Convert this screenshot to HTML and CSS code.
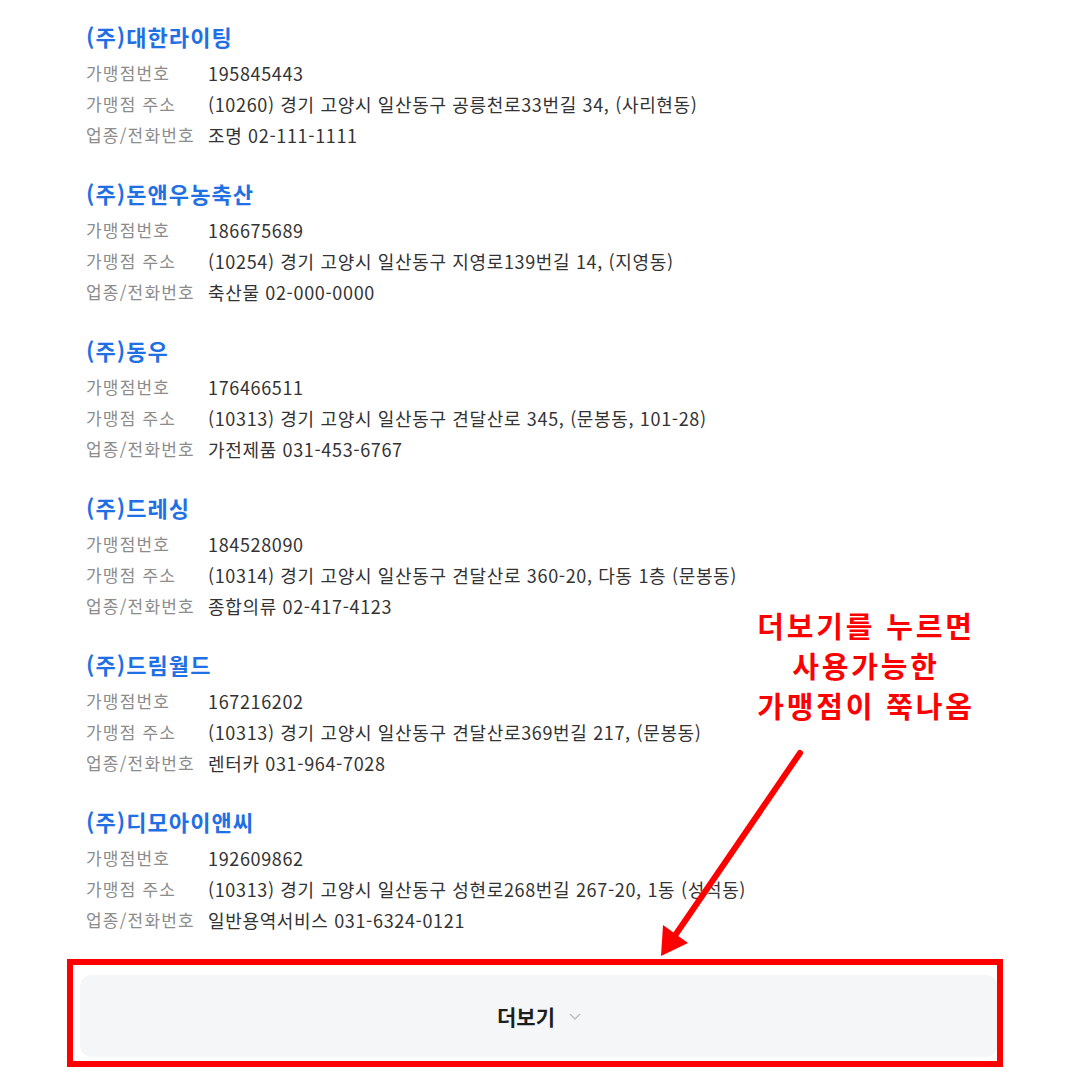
FILE: index.html
```html
<!DOCTYPE html>
<html lang="ko">
<head>
<meta charset="utf-8">
<title>가맹점 목록</title>
<link rel="stylesheet" href="styles.css">
</head>
<body>
<main class="page">
  <ul class="stores">
    <li class="store">
      <h2 class="store-name">(주)대한라이팅</h2>
      <dl class="info">
        <div class="row"><dt>가맹점번호</dt><dd>195845443</dd></div>
        <div class="row"><dt>가맹점 주소</dt><dd>(10260) 경기 고양시 일산동구 공릉천로33번길 34, (사리현동)</dd></div>
        <div class="row"><dt>업종/전화번호</dt><dd>조명 02-111-1111</dd></div>
      </dl>
    </li>
    <li class="store">
      <h2 class="store-name">(주)돈앤우농축산</h2>
      <dl class="info">
        <div class="row"><dt>가맹점번호</dt><dd>186675689</dd></div>
        <div class="row"><dt>가맹점 주소</dt><dd>(10254) 경기 고양시 일산동구 지영로139번길 14, (지영동)</dd></div>
        <div class="row"><dt>업종/전화번호</dt><dd>축산물 02-000-0000</dd></div>
      </dl>
    </li>
    <li class="store">
      <h2 class="store-name">(주)동우</h2>
      <dl class="info">
        <div class="row"><dt>가맹점번호</dt><dd>176466511</dd></div>
        <div class="row"><dt>가맹점 주소</dt><dd>(10313) 경기 고양시 일산동구 견달산로 345, (문봉동, 101-28)</dd></div>
        <div class="row"><dt>업종/전화번호</dt><dd>가전제품 031-453-6767</dd></div>
      </dl>
    </li>
    <li class="store">
      <h2 class="store-name">(주)드레싱</h2>
      <dl class="info">
        <div class="row"><dt>가맹점번호</dt><dd>184528090</dd></div>
        <div class="row"><dt>가맹점 주소</dt><dd>(10314) 경기 고양시 일산동구 견달산로 360-20, 다동 1층 (문봉동)</dd></div>
        <div class="row"><dt>업종/전화번호</dt><dd>종합의류 02-417-4123</dd></div>
      </dl>
    </li>
    <li class="store">
      <h2 class="store-name">(주)드림월드</h2>
      <dl class="info">
        <div class="row"><dt>가맹점번호</dt><dd>167216202</dd></div>
        <div class="row"><dt>가맹점 주소</dt><dd>(10313) 경기 고양시 일산동구 견달산로369번길 217, (문봉동)</dd></div>
        <div class="row"><dt>업종/전화번호</dt><dd>렌터카 031-964-7028</dd></div>
      </dl>
    </li>
    <li class="store">
      <h2 class="store-name">(주)디모아이앤씨</h2>
      <dl class="info">
        <div class="row"><dt>가맹점번호</dt><dd>192609862</dd></div>
        <div class="row"><dt>가맹점 주소</dt><dd>(10313) 경기 고양시 일산동구 성현로268번길 267-20, 1동 (성석동)</dd></div>
        <div class="row"><dt>업종/전화번호</dt><dd>일반용역서비스 031-6324-0121</dd></div>
      </dl>
    </li>
  </ul>
  <button class="more-btn" type="button">
    <span class="more-label">더보기</span>
    <svg class="chev" width="12" height="8" viewBox="0 0 12 8" aria-hidden="true"><path d="M1.5 1.5 L6 6 L10.5 1.5" fill="none" stroke="#b8bcc2" stroke-width="1.4" stroke-linecap="round" stroke-linejoin="round"/></svg>
  </button>
</main>

<div class="note">더보기를 누르면<br>사용가능한<br>가맹점이 쭉나옴</div>
<div class="highlight-box"></div>
<svg class="arrow" width="1080" height="1080" viewBox="0 0 1080 1080" aria-hidden="true">
  <line x1="800" y1="753" x2="674" y2="937" stroke="#ff0000" stroke-width="6" stroke-linecap="round"/>
  <polygon points="661,956 688,943 663,925" fill="#ff0000"/>
</svg>
</body>
</html>
```
FILE: styles.css
```css
* { box-sizing: border-box; }
html, body {
  margin: 0;
  padding: 0;
  background: #ffffff;
}
body {
  width: 1080px;
  height: 1080px;
  overflow: hidden;
  position: relative;
  font-family: "Noto Sans CJK KR", "Noto Sans", sans-serif;
}
.page {
  padding: 21px 0 0 0;
}
.stores {
  list-style: none;
  margin: 0;
  padding: 0 0 0 86px;
  display: flex;
  flex-direction: column;
  gap: 28px;
}
.store-name {
  margin: 0 0 6px 0;
  font-size: 22px;
  line-height: 30px;
  font-weight: 700;
  color: #1f6fe5;
  letter-spacing: 1.1px;
}
.info {
  margin: 0;
  display: flex;
  flex-direction: column;
}
.row {
  display: flex;
  height: 31px;
  align-items: center;
}
.row dt {
  width: 122px;
  flex: none;
  font-size: 17px;
  color: #8c8c8c;
  letter-spacing: 1.2px;
}
.row dd {
  margin: 0;
  font-size: 18px;
  color: #333333;
  letter-spacing: 0.65px;
}
.more-btn {
  margin: 40px 0 0 80px;
  width: 918px;
  height: 82px;
  border: none;
  border-radius: 12px;
  background: #f5f6f8;
  display: flex;
  align-items: center;
  justify-content: center;
  gap: 14px;
  font-family: inherit;
  cursor: pointer;
}
.more-label {
  font-size: 21px;
  font-weight: 700;
  color: #1e1e1e;
}
.chev { margin-top: 2px; }
.note {
  position: absolute;
  left: 738px;
  top: 605px;
  width: 256px;
  text-align: center;
  color: #ff0000;
  font-size: 29px;
  font-weight: 700;
  line-height: 40px;
  letter-spacing: 2.8px;
}
.highlight-box {
  position: absolute;
  left: 67px;
  top: 959px;
  width: 936px;
  height: 108px;
  border: 6px solid #ff0000;
}
.arrow {
  position: absolute;
  left: 0;
  top: 0;
  pointer-events: none;
}
```
